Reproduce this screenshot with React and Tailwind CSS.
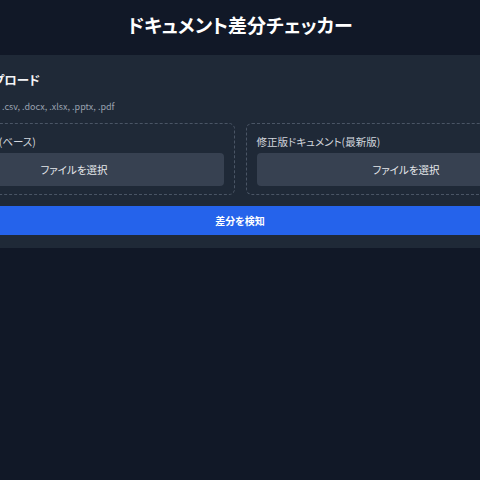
export default function App() {
  const font = { fontFamily: '"Noto Sans CJK JP", "Noto Sans", sans-serif', fontFeatureSettings: '"palt"' };
  return (
    <div className="min-h-screen w-full overflow-hidden bg-[#111827] flex flex-col items-center" style={font}>
      <div className="h-[55px] w-full flex items-center justify-center pb-[7px]">
        <h1 className="text-[19px] font-bold text-white leading-none">ドキュメント差分チェッカー</h1>
      </div>
      <div className="w-[685px] shrink-0 bg-[#1f2937] rounded-lg px-4 pt-[15px] pb-[13px]">
        <h2 className="text-[12.5px] leading-[20px] font-bold text-gray-100">ファイルのアップロード</h2>
        <p className="mt-[9px] text-[9px] leading-[15px] text-gray-400">対応: .txt, .json, .png, .csv, .docx, .xlsx, .pptx, .pdf</p>
        <div className="mt-[9px] grid grid-cols-2 gap-[11px]">
          <div className="border border-dashed border-gray-600 rounded-md px-[10px] pt-[10px] pb-[8px]">
            <div className="text-[10.5px] leading-[15px] text-gray-300">元のドキュメント(ベース)</div>
            <button className="mt-[4px] w-full h-[33px] rounded bg-[#374151] text-[10.5px] text-gray-200">ファイルを選択</button>
          </div>
          <div className="border border-dashed border-gray-600 rounded-md px-[10px] pt-[10px] pb-[8px]">
            <div className="text-[10.5px] leading-[15px] text-gray-300">修正版ドキュメント(最新版)</div>
            <button className="mt-[4px] w-full h-[33px] rounded bg-[#374151] text-[10.5px] text-gray-200">ファイルを選択</button>
          </div>
        </div>
        <button className="mt-[11px] w-full h-[29px] rounded bg-[#2563eb] text-[10px] font-bold text-white">差分を検知</button>
      </div>
    </div>
  );
}
